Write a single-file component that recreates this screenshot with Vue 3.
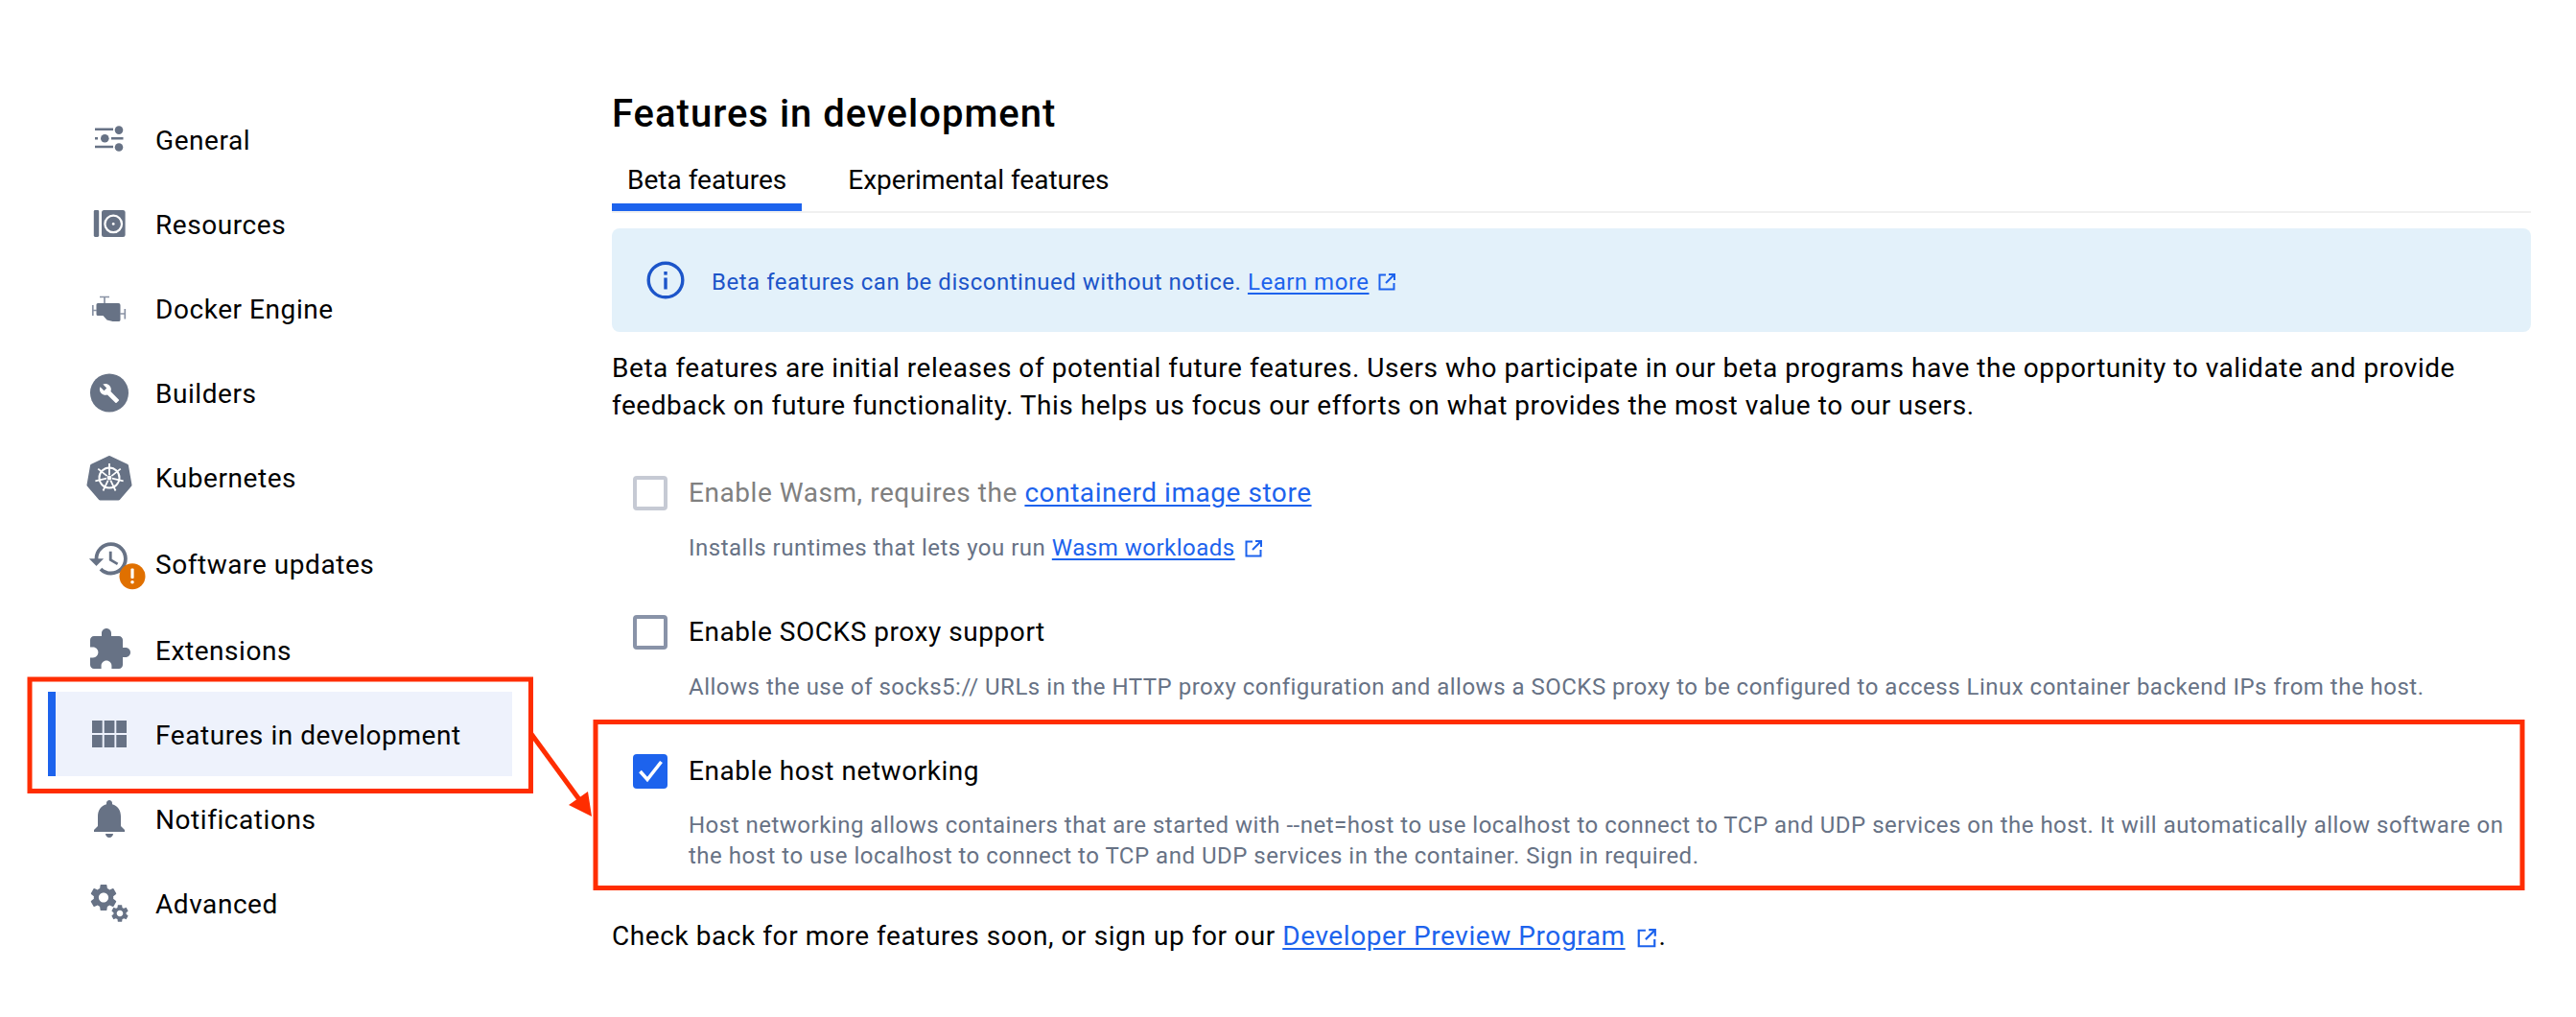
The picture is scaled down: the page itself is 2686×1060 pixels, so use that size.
<script setup>
const spokes = [0, 51.43, 102.86, 154.29, 205.71, 257.14, 308.57]
const gearBig = 'M19.14 12.94c.04-.3.06-.61.06-.94 0-.32-.02-.64-.07-.94l2.03-1.58a.49.49 0 0 0 .12-.61l-1.92-3.32a.488.488 0 0 0-.59-.22l-2.39.96c-.5-.38-1.03-.7-1.62-.94l-.36-2.54a.484.484 0 0 0-.48-.41h-3.84c-.24 0-.43.17-.47.41l-.36 2.54c-.59.24-1.13.57-1.62.94l-2.39-.96c-.22-.08-.47 0-.59.22L2.74 8.87c-.12.21-.08.47.12.61l2.03 1.58c-.05.3-.09.63-.09.94s.02.64.07.94l-2.03 1.58a.49.49 0 0 0-.12.61l1.92 3.32c.12.22.37.29.59.22l2.39-.96c.5.38 1.03.7 1.62.94l.36 2.54c.05.24.24.41.48.41h3.84c.24 0 .44-.17.47-.41l.36-2.54c.59-.24 1.13-.56 1.62-.94l2.39.96c.22.08.47 0 .59-.22l1.92-3.32c.12-.22.07-.47-.12-.61l-2.01-1.58zM12 15.6c-1.98 0-3.6-1.62-3.6-3.6s1.62-3.6 3.6-3.6 3.6 1.62 3.6 3.6-1.62 3.6-3.6 3.6z'
</script>

<template>
  <div class="page">
    <nav class="sidebar">
      <div class="item">
        <svg class="icon" viewBox="90 121 48 48">
          <path d="M99 134.8h19M99 153h19M99 144.2h3M116 144.2h12.5" stroke="#677285" stroke-width="2.4" fill="none" />
          <circle cx="124" cy="135.6" r="4.3" /><circle cx="109.3" cy="144.3" r="4.3" /><circle cx="124" cy="153.5" r="4.3" />
        </svg>
        <span>General</span>
      </div>
      <div class="item">
        <svg class="icon" viewBox="90 209 48 48">
          <rect x="97.8" y="219" width="5.4" height="28" rx="1.4" />
          <rect x="106" y="219" width="24.6" height="28" rx="2.5" />
          <circle cx="118.2" cy="233.4" r="8.8" fill="none" stroke="#fff" stroke-width="2.2" />
          <circle cx="118.2" cy="233.4" r="1.4" fill="#fff" />
        </svg>
        <span>Resources</span>
      </div>
      <div class="item">
        <svg class="icon" viewBox="90 297 48 48">
          <path d="M104 309.5h10M109 309.5v7M96.8 318v11M96.8 323.5h4M130.3 322v10.500M130.300 327h-5" stroke="#8a93a5" stroke-width="1.7" fill="none" />
          <path d="M102 316h21.500q2 0 2 2v15.500q0 1.500-2 1.500h-6l-6-1.500-4-4.500h-5.500q-1.500 0-1.500-1.500v-10q0-1.500 1.500-1.500z" />
        </svg>
        <span>Docker Engine</span>
      </div>
      <div class="item">
        <svg class="icon" viewBox="90 385 48 48">
          <circle cx="114" cy="409.500" r="20" />
          <svg x="103" y="399" width="22" height="22" viewBox="0 0 24 24"><path fill="#fff" d="M22.700 19l-9.100-9.100c.9-2.300.4-5-1.500-6.900-2-2-5-2.400-7.400-1.300L9 6 6 9 1.600 4.700C.4 7.100.9 10.100 2.900 12.100c1.900 1.900 4.600 2.400 6.900 1.500l9.100 9.100c.4.4 1 .4 1.400 0l2.300-2.300c.5-.4.5-1.100.1-1.400z" /></svg>
        </svg>
        <span>Builders</span>
      </div>
      <div class="item">
        <svg class="icon" viewBox="90 473 48 48">
          <path d="M114 477l18 8.500 3.500 20-12 14h-19l-12-14 3.500-20z" stroke="#677285" stroke-width="4" stroke-linejoin="round" />
          <g stroke="#fff" fill="none">
            <circle cx="114" cy="498" r="10.500" stroke-width="2" />
            <g v-for="a in spokes" :key="a" :transform="`rotate(${a} 114 498)`">
              <path d="M114 495v-12" stroke-width="1.800" />
            </g>
          </g>
          <circle cx="114" cy="498" r="2.400" fill="#fff" />
        </svg>
        <span>Kubernetes</span>
      </div>
      <div class="item tall">
        <svg class="icon" viewBox="90 563 48 48">
          <svg x="91" y="559.500" width="45.600" height="45.600" viewBox="0 0 24 24"><path d="M13 3a9 9 0 0 0-9 9H1l3.890 3.890.07.14L9 12H6c0-3.870 3.130-7 7-7s7 3.130 7 7-3.130 7-7 7c-1.930 0-3.680-.79-4.940-2.060l-1.420 1.420A8.954 8.954 0 0 0 13 21a9 9 0 0 0 0-18zm-1 5v5l4.280 2.540.72-1.210-3.500-2.080V8H12z" /></svg>
          <circle cx="138" cy="600.700" r="13.500" fill="#e07000" />
          <rect x="136.400" y="592.500" width="3.200" height="10.500" rx="1" fill="#fff" />
          <circle cx="138" cy="606.800" r="1.800" fill="#fff" />
        </svg>
        <span>Software updates</span>
      </div>
      <div class="item">
        <svg class="icon" viewBox="0 0 24 24">
          <path d="M20.500 11H19V7c0-1.100-.9-2-2-2h-4V3.500C13 2.120 11.880 1 10.500 1S8 2.120 8 3.500V5H4c-1.100 0-1.990.9-1.990 2v3.800H3.500c1.490 0 2.700 1.210 2.700 2.700s-1.210 2.700-2.700 2.700H2V20c0 1.100.9 2 2 2h3.800v-1.500c0-1.490 1.210-2.700 2.700-2.700 1.490 0 2.700 1.210 2.700 2.700V22H17c1.100 0 2-.9 2-2v-4h1.500c1.380 0 2.500-1.120 2.500-2.500S21.880 11 20.500 11z" />
        </svg>
        <span>Extensions</span>
      </div>
      <div class="item active">
        <svg class="icon" viewBox="90 741 48 48">
          <path d="M96 751h10.700v13h-10.700zM108.700 751h10.700v13h-10.700zM121.300 751h10.700v13h-10.700zM96 766h10.700v13h-10.700zM108.700 766h10.700v13h-10.700zM121.300 766h10.700v13h-10.700z" />
        </svg>
        <span>Features in development</span>
      </div>
      <div class="item">
        <svg class="icon" viewBox="0 0 24 24">
          <path d="M12 22c1.100 0 2-.9 2-2h-4c0 1.100.89 2 2 2zm6-6v-5c0-3.070-1.640-5.640-4.500-6.320V4c0-.83-.67-1.500-1.500-1.500s-1.500.67-1.500 1.500v.68C7.630 5.360 6 7.920 6 11v5l-2 2v1h16v-1l-2-2z" />
        </svg>
        <span>Notifications</span>
      </div>
      <div class="item">
        <svg class="icon" viewBox="90 917 48 48">
          <svg x="91" y="918.500" width="34" height="34" viewBox="0 0 24 24"><path :d="gearBig" /></svg>
          <svg x="114" y="941" width="22" height="22" viewBox="0 0 24 24"><path :d="gearBig" /></svg>
        </svg>
        <span>Advanced</span>
      </div>
    </nav>

    <main class="main">
      <h1 class="title">Features in development</h1>
      <div class="tabs">
        <div class="tab selected">Beta features</div>
        <div class="tab">Experimental features</div>
      </div>

      <div class="alert">
        <svg class="info" viewBox="0 0 40 40">
          <circle cx="20" cy="20" r="17.800" fill="none" stroke="#1c55c9" stroke-width="3.400" />
          <rect x="18.300" y="17.500" width="3.400" height="12" fill="#1c55c9" />
          <rect x="18.300" y="11" width="3.400" height="3.600" fill="#1c55c9" />
        </svg>
        <span class="alert-text">Beta features can be discontinued without notice. <a class="link">Learn more</a></span>
        <svg class="ext" viewBox="0 0 20 20"><path d="M9 2.500H2.500v15h15V11M12 2h6v6M18 2L9 11" /></svg>
      </div>

      <p class="desc">Beta features are initial releases of potential future features. Users who participate in our beta programs have the opportunity to validate and provide feedback on future functionality. This helps us focus our efforts on what provides the most value to our users.</p>

      <section class="feature wasm">
        <span class="box disabled"></span>
        <div class="label muted">Enable Wasm, requires the <a class="link">containerd image store</a></div>
        <div class="sub">Installs runtimes that lets you run <a class="link">Wasm workloads</a>
          <svg class="ext small" viewBox="0 0 20 20"><path d="M9 2.500H2.500v15h15V11M12 2h6v6M18 2L9 11" /></svg>
        </div>
      </section>

      <section class="feature socks">
        <span class="box"></span>
        <div class="label">Enable SOCKS proxy support</div>
        <div class="sub">Allows the use of socks5:// URLs in the HTTP proxy configuration and allows a SOCKS proxy to be configured to access Linux container backend IPs from the host.</div>
      </section>

      <section class="feature host">
        <span class="box checked">
          <svg viewBox="0 0 36 36"><path d="M7.500 18l7.500 8.500L29.500 8" fill="none" stroke="#fff" stroke-width="3.600" /></svg>
        </span>
        <div class="label">Enable host networking</div>
        <div class="sub">Host networking allows containers that are started with --net=host to use localhost to connect to TCP and UDP services on the host. It will automatically allow software on the host to use localhost to connect to TCP and UDP services in the container. Sign in required.</div>
      </section>

      <p class="footer">Check back for more features soon, or sign up for our <a class="link">Developer Preview Program</a>
        <svg class="ext foot" viewBox="0 0 20 20"><path d="M9 2.500H2.500v15h15V11M12 2h6v6M18 2L9 11" /></svg>.</p>
    </main>

    <svg class="annotations" viewBox="0 0 2686 1060">
      <g fill="none" stroke="#ff2d00" stroke-width="5">
        <rect x="31" y="708" width="522.500" height="116.500" />
        <rect x="621" y="752.500" width="2009" height="173" />
        <path d="M554 765L606 836" />
      </g>
      <path d="M617 851L593 839L613 825z" fill="#ff2d00" />
    </svg>
  </div>
</template>

<style>
html, body { margin: 0; background: #fff; }
</style>

<style scoped>
.page {
  position: relative;
  width: 2686px;
  height: 1060px;
  display: flex;
  align-items: flex-start;
  font-family: Roboto, "Liberation Sans", sans-serif;
  color: #000;
  overflow: hidden;
}
.sidebar {
  width: 484px;
  margin: 101px 0 0 50px;
  flex: none;
}
.item {
  height: 88px;
  display: flex;
  align-items: center;
  gap: 24px;
  padding-left: 40px;
  font-size: 28px;
  letter-spacing: 0.56px;
}
.item span { padding-top: 2px; }
.item.tall { height: 92px; }
.item.active {
  background: #eef2fc;
  box-shadow: inset 8px 0 0 #1d63ed;
}
.icon {
  width: 48px;
  height: 48px;
  flex: none;
  fill: #677285;
  overflow: visible;
}
.main {
  width: 2001px;
  margin: 91px 0 0 104px;
  flex: none;
}
.title {
  margin: 0;
  font-size: 40px;
  line-height: 56px;
  font-weight: 500;
  letter-spacing: 1px;
}
.tabs {
  display: flex;
  margin-top: 20px;
  border-bottom: 2px solid #f0f0f0;
}
.tab {
  padding: 1px 16px 4px;
  margin-right: 32px;
  font-size: 28px;
  line-height: 40px;
  border-bottom: 8px solid transparent;
}
.tab.selected { border-bottom-color: #1d63ed; }
.alert {
  margin-top: 16px;
  height: 108px;
  box-sizing: border-box;
  padding: 0 0 0 36px;
  border-radius: 8px;
  background: #e3f1fa;
  color: #1c55c9;
  display: flex;
  align-items: center;
  font-size: 24px;
  letter-spacing: 0.52px;
}
.alert-text { padding-top: 3px; }
.info { width: 40px; height: 40px; margin-right: 28px; flex: none; }
.link { color: #1d63ed; text-decoration: underline; text-underline-offset: 3px; }
.ext {
  width: 20px;
  height: 20px;
  fill: none;
  stroke: #1d63ed;
  stroke-width: 2;
  margin-left: 8px;
  margin-top: 3px;
}
.ext.small { vertical-align: -3px; margin-left: 9px; margin-top: 0; }
.ext.foot { width: 22px; height: 22px; vertical-align: -4px; margin: 0 2px 0 11px; }
.desc {
  margin: 18px 0 0;
  font-size: 28px;
  line-height: 39px;
  letter-spacing: 0.55px;
}
.feature {
  display: grid;
  grid-template-columns: 36px 1fr;
  column-gap: 22px;
  align-items: center;
  padding-left: 22px;
}
.wasm { margin-top: 52px; }
.socks { margin-top: 52px; }
.host { margin-top: 52px; padding-right: 18px; }
.box {
  width: 36px;
  height: 36px;
  box-sizing: border-box;
  border: 4px solid #8993a8;
  border-radius: 4px;
  display: block;
}
.box.disabled { border-color: #c6cad4; }
.box.checked { border: 0; background: #1d63ed; }
.box.checked svg { width: 36px; height: 36px; display: block; }
.label { font-size: 28px; line-height: 40px; letter-spacing: 0.55px; }
.label.muted { color: #808080; }
.sub {
  grid-column: 2;
  margin-top: 21px;
  font-size: 24px;
  line-height: 32px;
  color: #677285;
  letter-spacing: 0.5px;
}
.host .sub { margin-top: 20px; }
.footer {
  margin: 48px 0 0;
  font-size: 28px;
  line-height: 40px;
  letter-spacing: 0.57px;
}
.annotations {
  position: absolute;
  left: 0;
  top: 0;
  width: 2686px;
  height: 1060px;
  pointer-events: none;
}
</style>
